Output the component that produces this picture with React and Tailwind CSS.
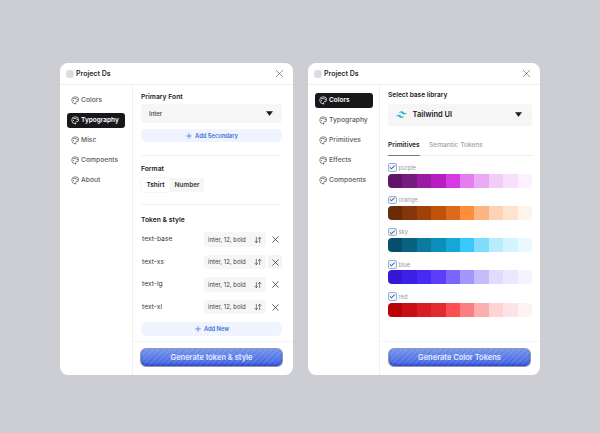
import React from "react";
import { X, Plus, ArrowDownUp, Palette, Check } from "lucide-react";

function Caret() {
  return (
    <svg width="7" height="5" viewBox="0 0 7 5"><path d="M0.5 0.5h6L3.5 4.5z" fill="#1a1a1a" stroke="#1a1a1a" strokeWidth="0.5" strokeLinejoin="round" /></svg>
  );
}

function Header() {
  return (
    <div className="flex h-[22px] shrink-0 items-center justify-between border-b border-[#f0f0f2] pl-[5.5px] pr-[7.5px]">
      <div className="flex items-center gap-[2.5px]">
        <div className="h-[8px] w-[8px] rounded-[3px] bg-[#dcdcde]" />
        <span className="text-[7px] font-semibold leading-none text-[#2a2a2e]">Project Ds</span>
      </div>
      <X size={13} strokeWidth={1.1} className="text-[#4a4a4e]" />
    </div>
  );
}

function Sidebar({ items, active, w }) {
  return (
    <div className={"flex shrink-0 flex-col gap-[5px] border-r border-[#f0f0f2] pl-[7px] pt-[8px] " + w}>
      {items.map((it) => (
        <div
          key={it}
          className={
            "flex h-[15px] w-[58px] items-center gap-[2px] rounded-[3px] pl-[3.5px] leading-none " +
            (it === active ? "bg-[#18181a] text-[6.5px] font-semibold text-white" : "text-[6.75px] font-medium text-[#5c5c60]")
          }
        >
          <Palette size={8.5} strokeWidth={2} className="shrink-0" />
          <span>{it}</span>
        </div>
      ))}
    </div>
  );
}

function GenButton({ label }) {
  return (
    <div className="flex h-[19px] items-center justify-center rounded-[6px] border border-[#9196ae] bg-[repeating-linear-gradient(135deg,rgba(255,255,255,0.09)_0_2px,rgba(255,255,255,0)_2px_4px),linear-gradient(180deg,#7393ec_0%,#3c5fe2_100%)] text-[7.5px] font-semibold leading-none text-[#e8edff] shadow-[inset_0_-2px_2px_rgba(30,50,170,0.45)]">
      {label}
    </div>
  );
}

function AddButton({ label, h }) {
  return (
    <div className={"flex items-center justify-center gap-[2px] rounded-[5px] bg-[#eff4fe] text-[5.75px] font-semibold leading-none text-[#3f6fd8] " + h}>
      <Plus size={8} strokeWidth={2.2} />
      {label}
    </div>
  );
}

function TokenRow({ name, hl }) {
  return (
    <div className="flex h-[15px] items-center justify-between">
      <span className="pl-[1px] text-[6.75px] leading-none text-[#3a3a3e]">{name}</span>
      <div className="flex items-center gap-[2px]">
        <div className="flex h-[14.5px] w-[62px] items-center justify-between rounded-[3px] bg-[#f6f6f7] pl-[4px] pr-[4px] text-[6px] leading-none text-[#3f3f44]">
          <span>inter, 12, bold</span>
          <ArrowDownUp size={8} strokeWidth={2} className="text-[#3a3a3e]" />
        </div>
        <div className={"flex h-[14.5px] w-[14px] items-center justify-center rounded-[3px] " + (hl ? "bg-[#f4f4f5]" : "")}>
          <X size={11} strokeWidth={1.6} className="text-[#2a2a2e]" />
        </div>
      </div>
    </div>
  );
}

function Typography() {
  return (
    <div className="flex min-w-0 flex-1 flex-col pl-[8px] pr-[11px]">
      <div className="pt-[7px] text-[6.75px] font-semibold leading-[9px] text-[#1a1a1e]">Primary Font</div>
      <div className="mt-[3px] flex h-[19px] items-center justify-between rounded-[4px] bg-[#f6f6f7] pl-[8px] pr-[9.5px] text-[6px] font-medium leading-none text-[#3a3a3e]">
        Inter
        <Caret />
      </div>
      <div className="mt-[6px]"><AddButton label="Add Secondary" h="h-[13px]" /></div>
      <div className="mt-[13px] border-t border-[#f2f2f4]" />
      <div className="mt-[8px] text-[6.75px] font-semibold leading-[9px] text-[#1a1a1e]">Format</div>
      <div className="mt-[5px] flex h-[14px] w-[63px] items-center rounded-[3px] bg-[#f6f6f7] text-[6.5px] font-semibold leading-none text-[#3a3a3e]">
        <div className="flex h-full w-[29px] items-center justify-center rounded-[3px] bg-white text-[#222226] shadow-[0_0_0_1px_#f6f6f7]">Tshirt</div>
        <div className="flex-1 text-center">Number</div>
      </div>
      <div className="mt-[12px] border-t border-[#f2f2f4]" />
      <div className="mt-[10px] text-[6.75px] font-semibold leading-[9px] text-[#1a1a1e]">Token &amp; style</div>
      <div className="mt-[8px] flex flex-col gap-[7.5px]">
        <TokenRow name="text-base" />
        <TokenRow name="text-xs" hl />
        <TokenRow name="text-lg" />
        <TokenRow name="text-xl" />
      </div>
      <div className="mt-[7px]"><AddButton label="Add New" h="h-[14px]" /></div>
    </div>
  );
}

const palettes = [
  ["purple", ["#5f1468","#771a80","#9a1ca3","#b51fc0","#d63be2","#e47eef","#ecaaf4","#f3cdf8","#f7e0fb","#fbf2fd"]],
  ["orange", ["#6a2c06","#833608","#a04208","#c0520a","#dc6a1a","#fb8f3c","#fdb582","#fed3b5","#fee3d0","#fef4ec"]],
  ["sky", ["#064f6c","#086282","#0a7aa0","#0a8fba","#13a8d8","#38c8fc","#7fdcfd","#b8ecfe","#d4f4ff","#e9f9ff"]],
  ["blue", ["#3418d4","#3c20e4","#472bf4","#5a3ef8","#7b66fa","#a497fb","#c5bcfc","#e0dcfd","#eae7fe","#f5f3fe"]],
  ["red", ["#b80409","#cb0e13","#d81e23","#e22b2f","#fb4f52","#fb7f82","#fdaeb0","#fed3d4","#fee3e4","#fef3f3"]],
];

function Colors() {
  return (
    <div className="flex min-w-0 flex-1 flex-col px-[8px]">
      <div className="pt-[6px] text-[6.6px] font-semibold leading-[9px] text-[#1a1a1e]">Select base library</div>
      <div className="mt-[3.5px] flex h-[22px] items-center justify-between rounded-[4px] bg-[#f6f6f7] pl-[7px] pr-[10px]">
        <div className="flex items-center gap-[4.5px]">
          <svg width="13" height="13" viewBox="0 0 24 24"><path fill="#2bb5d8" d="M12 6c-2.67 0-4.33 1.33-5 4 1-1.33 2.17-1.83 3.5-1.5.76.19 1.31.74 1.91 1.35.98 1 2.09 2.15 4.59 2.15 2.67 0 4.33-1.33 5-4-1 1.33-2.17 1.83-3.5 1.5-.76-.19-1.31-.74-1.91-1.35C15.61 7.15 14.5 6 12 6zm-5 6.5c-2.67 0-4.33 1.33-5 4 1-1.33 2.17-1.83 3.5-1.5.76.19 1.3.74 1.91 1.35.98 1 2.09 2.15 4.59 2.15 2.67 0 4.33-1.33 5-4-1 1.33-2.17 1.83-3.5 1.5-.76-.19-1.3-.74-1.91-1.35C10.61 13.65 9.5 12.5 7 12.5z" /></svg>
          <span className="text-[7.5px] font-semibold leading-none text-[#222226]">Tailwind UI</span>
        </div>
        <Caret />
      </div>
      <div className="mt-[13.5px] flex h-[16.5px] items-start border-b border-[#eeeef0] text-[6.6px] leading-[13px]">
        <div className="h-[16.5px] w-[32px] border-b border-[#77777c] font-semibold text-[#26262a]">Primitives</div>
        <div className="ml-[9px] font-medium text-[#a3a3a8]">Semantic Tokens</div>
      </div>
      <div className="mt-[7.5px] flex flex-col gap-[7.8px]">
        {palettes.map(([name, cols]) => (
          <div key={name}>
            <div className="flex h-[9px] items-center gap-[2px]">
              <div className="flex h-[8.5px] w-[8.5px] items-center justify-center rounded-[2px] border border-[#8fb4e4] bg-[#eef5fd]">
                <Check size={7} strokeWidth={3.5} className="text-[#26262a]" />
              </div>
              <span className="text-[5.75px] leading-none text-[#97979c]">{name}</span>
            </div>
            <div className="mt-[1.5px] flex h-[14px] overflow-hidden rounded-[4px]">
              {cols.map((c) => (
                <div key={c} className="flex-1" style={{ backgroundColor: c }} />
              ))}
            </div>
          </div>
        ))}
      </div>
    </div>
  );
}

function Card({ items, active, label, width, side, foot, children }) {
  return (
    <div className={"flex h-[312px] shrink-0 flex-col overflow-hidden rounded-[8px] bg-white " + width}>
      <Header />
      <div className="flex min-h-0 flex-1">
        <Sidebar items={items} active={active} w={side} />
        <div className="flex min-w-0 flex-1 flex-col">
          <div className="min-h-0 flex-1">{children}</div>
          <div className={"flex h-[34px] shrink-0 flex-col border-t border-[#f4f4f6] pt-[6px] " + foot}>
            <GenButton label={label} />
          </div>
        </div>
      </div>
    </div>
  );
}

export default function App() {
  return (
    <div className="flex h-[433px] w-[600px] gap-[15px] overflow-hidden bg-[#cdced3] pl-[60px] pt-[63px] font-['Inter',sans-serif]">
      <Card width="w-[233px]" side="w-[73px]" foot="pl-[7px] pr-[10px]" items={["Colors", "Typography", "Misc", "Compoents", "About"]} active="Typography" label="Generate token & style">
        <Typography />
      </Card>
      <Card width="w-[232px]" side="w-[72px]" foot="pl-[8px] pr-[9px]" items={["Colors", "Typography", "Primitives", "Effects", "Compoents"]} active="Colors" label="Generate Color Tokens">
        <Colors />
      </Card>
    </div>
  );
}
